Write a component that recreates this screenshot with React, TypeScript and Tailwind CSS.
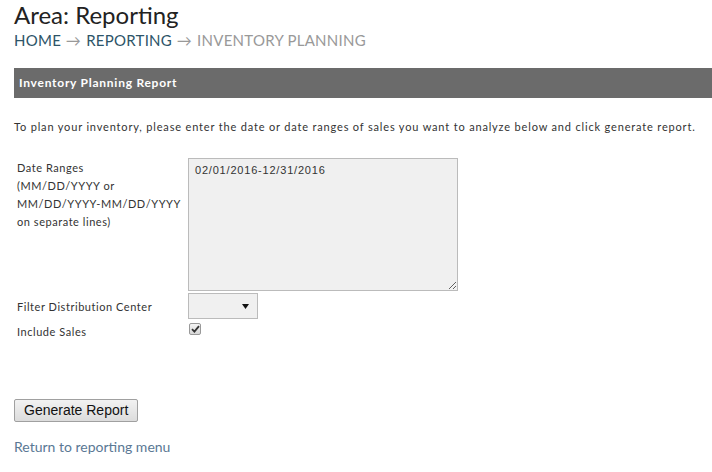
import React from "react";

export default function App() {
  return (
    <div className="w-[712px] h-[472px] bg-white overflow-hidden text-[#333]" style={{ fontFamily: "Lato, 'Open Sans', sans-serif" }}>
      <div className="pl-[14px] pt-[1px]">
        <h1 className="text-[24px] leading-[28px] text-[#222] font-normal">Area: Reporting</h1>
        <div className="mt-[2px] text-[15px] leading-[18px] tracking-[0.25px] uppercase">
          <span className="text-[#2d5468]">Home</span>
          <span className="text-[#999] tracking-[0.8px]"> → </span>
          <span className="text-[#2d5468]">Reporting</span>
          <span className="text-[#999] tracking-[0.8px]"> → </span>
          <span className="text-[#999]">Inventory Planning</span>
        </div>
      </div>
      <div className="ml-[14px] mt-[19px] h-[30px] bg-[#6b6b6b] flex items-center pl-[5px]">
        <span className="text-white font-bold text-[12px] tracking-[0.75px]">Inventory Planning Report</span>
      </div>
      <p className="ml-[14px] mt-[22px] text-[11px] leading-[14px] tracking-[0.83px] text-[#333]">
        To plan your inventory, please enter the date or date ranges of sales you want to analyze below and click generate report.
      </p>
      <div className="ml-[17px] mt-[24px] grid grid-cols-[171px_1fr] text-[11px] tracking-[0.55px]">
        <div className="leading-[18px] pt-[1px]">
          Date Ranges<br />(MM/DD/YYYY or<br />MM/DD/YYYY-MM/DD/YYYY<br />on separate lines)
        </div>
        <div>
          <textarea
            className="block w-[270px] h-[133px] bg-[#f0f0f0] border border-[#bbb] px-[6px] py-[5px] text-[11px] leading-[13px] tracking-[0.8px] text-[#333] resize outline-none"
            style={{ fontFamily: "'Liberation Sans', Arial, sans-serif" }}
            defaultValue="02/01/2016-12/31/2016"
          />
        </div>
        <div className="flex items-center h-[25px] mt-[4px]">Filter Distribution Center</div>
        <div className="mt-[2px]">
          <div className="w-[70px] h-[26px] bg-[#f0f0f0] border border-[#bbb] flex items-center justify-end pr-[8px]">
            <svg width="7" height="7" viewBox="0 0 7 7"><path d="M0 1 L7 1 L3.5 6 Z" fill="#111" /></svg>
          </div>
        </div>
        <div className="flex items-center h-[25px] mt-[0px]">Include Sales</div>
        <div className="pt-[3px] pl-[1px]">
          <div className="w-[12px] h-[12px] border border-[#999] rounded-[2px] bg-gradient-to-b from-[#f4f4f4] to-[#d8d8d8] flex items-center justify-center">
            <svg width="9" height="8" viewBox="0 0 9 8"><path d="M1 4.2 L3.4 6.6 L8 1.2" stroke="#333" strokeWidth="1.8" fill="none" /></svg>
          </div>
        </div>
      </div>
      <div className="ml-[14px] mt-[52px]">
        <button
          className="h-[23px] px-[9px] border border-[#a0a0a0] rounded-[2px] bg-gradient-to-b from-[#f2f2f2] to-[#dcdcdc] text-[14px] text-[#111] leading-[20px]"
          style={{ fontFamily: "'Liberation Sans', Arial, sans-serif" }}
        >
          Generate Report
        </button>
      </div>
      <div className="ml-[14px] mt-[16px] text-[14px] leading-[18px] text-[#5a7894]">Return to reporting menu</div>
    </div>
  );
}
